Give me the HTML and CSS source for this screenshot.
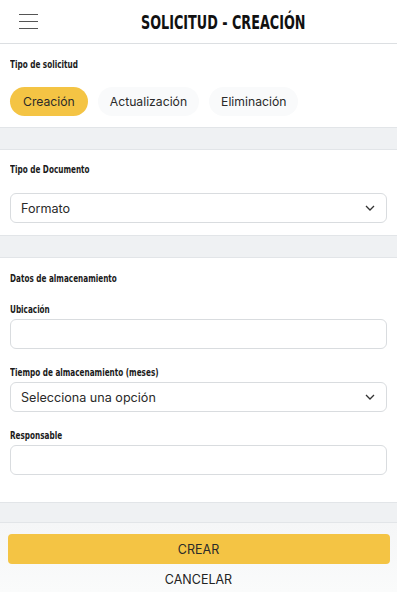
FILE: index.html
```html
<!DOCTYPE html>
<html lang="es">
<head>
<meta charset="utf-8">
<title>Solicitud - Creación</title>
<link rel="stylesheet" href="styles.css">
</head>
<body>
<div class="app">
  <header class="topbar">
    <button class="menu" aria-label="Menú">
      <span></span><span></span><span></span>
    </button>
    <h1 class="title">SOLICITUD - CREACIÓN</h1>
  </header>

  <main class="content">
    <section class="card card-type">
      <div class="label"><span>Tipo de solicitud</span></div>
      <div class="chips">
        <span class="chip active">Creación</span>
        <span class="chip">Actualización</span>
        <span class="chip">Eliminación</span>
      </div>
    </section>

    <section class="card card-doc">
      <div class="label"><span>Tipo de Documento</span></div>
      <div class="select">
        <span>Formato</span>
        <svg class="chev" width="10" height="6" viewBox="0 0 10 6"><path d="M1 1l4 4 4-4" fill="none" stroke="#333" stroke-width="1.3"/></svg>
      </div>
    </section>

    <section class="card card-store">
      <div class="label"><span>Datos de almacenamiento</span></div>
      <div class="field">
        <div class="label"><span>Ubicación</span></div>
        <div class="input"></div>
      </div>
      <div class="field">
        <div class="label"><span>Tiempo de almacenamiento (meses)</span></div>
        <div class="select">
          <span>Selecciona una opción</span>
          <svg class="chev" width="10" height="6" viewBox="0 0 10 6"><path d="M1 1l4 4 4-4" fill="none" stroke="#333" stroke-width="1.3"/></svg>
        </div>
      </div>
      <div class="field">
        <div class="label"><span>Responsable</span></div>
        <div class="input"></div>
      </div>
    </section>
  </main>

  <footer class="actions">
    <button class="btn-primary">CREAR</button>
    <button class="btn-link">CANCELAR</button>
  </footer>
</div>
</body>
</html>
```

FILE: styles.css
```css
* { box-sizing: border-box; }
html, body { margin: 0; padding: 0; }
body {
  background: #eff1f3;
  font-family: Inter, "Noto Sans", sans-serif;
  color: #222;
  width: 397px;
  height: 592px;
  overflow: hidden;
}
.app { display: flex; flex-direction: column; height: 592px; }

.topbar {
  height: 44px;
  background: #fff;
  border-bottom: 1px solid #dcdfe2;
  display: flex;
  align-items: center;
}
.menu {
  width: 56px;
  height: 43px;
  border: 0;
  background: transparent;
  padding: 0 0 0 19px;
  display: flex;
  flex-direction: column;
  justify-content: center;
  gap: 6px;
}
.menu span { display: block; width: 19px; height: 1.3px; background: #555; }
.title {
  margin: 0 0 0 85px;
  font-family: "DejaVu Sans Condensed", sans-serif;
  font-weight: 700;
  font-size: 20px;
  line-height: 22px;
  color: #111;
  white-space: nowrap;
  transform: scaleX(0.71);
  transform-origin: left center;
}

.content { display: flex; flex-direction: column; gap: 21px; }
.card {
  background: #fff;
  border-top: 1px solid #e2e5e8;
  border-bottom: 1px solid #e2e5e8;
  padding: 0 10px;
}
.card-type { padding-top: 14px; height: 84px; border-top: 0; }
.card-doc { padding-top: 13px; height: 87px; }
.card-store { padding-top: 14px; height: 246px; }

.label {
  font-family: "DejaVu Sans Condensed", sans-serif;
  font-weight: 700;
  font-size: 10.5px;
  color: #1a1a1a;
  line-height: 13px;
  white-space: nowrap;
}
.label span {
  display: inline-block;
  transform: scaleX(0.77);
  transform-origin: left center;
}
.chips { display: flex; gap: 10px; margin-top: 16px; }
.chip {
  height: 29px;
  border-radius: 15px;
  padding: 0 12px;
  display: flex;
  align-items: center;
  font-size: 12.2px;
  color: #2a2a2a;
  background: #f9fafb;
}
.chip.active { background: #f4c444; padding: 0 13px; }

.card-doc .select { margin-top: 17px; }
.select, .input {
  height: 30px;
  border: 1px solid #d9dcdf;
  border-radius: 6px;
  background: #fff;
}
.select {
  display: flex;
  align-items: center;
  justify-content: space-between;
  padding: 0 10px;
  font-size: 12.6px;
  color: #2a2a2a;
}
.chev { margin-right: 1px; }

.card-store > .label { margin-bottom: 18px; }
.field { margin-bottom: 17px; }
.field .label { margin-bottom: 3px; }

.actions {
  margin-top: 19px;
  border-top: 1px solid #e2e5e8;
  flex: 1;
  background: linear-gradient(#f5f6f7, #fafbfb);
  display: flex;
  flex-direction: column;
  align-items: center;
  padding-top: 11px;
}
.btn-primary {
  width: 382px;
  height: 30px;
  border: 0;
  border-radius: 4px;
  background: #f4c444;
  font-family: Inter, "Noto Sans", sans-serif;
  font-size: 12.5px;
  color: #2a2a2a;
}
.btn-link {
  border: 0;
  background: transparent;
  font-family: Inter, "Noto Sans", sans-serif;
  font-size: 12.5px;
  color: #222;
  margin-top: 4px;
  padding: 4px;
}
```
